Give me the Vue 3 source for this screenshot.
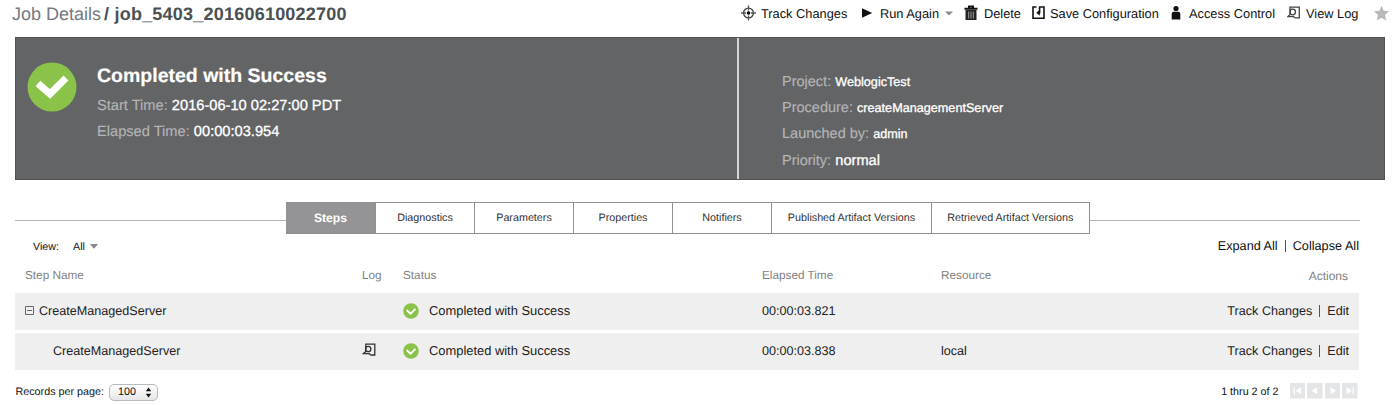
<script setup>
const info = [
  { label: 'Project:', value: 'WeblogicTest' },
  { label: 'Procedure:', value: 'createManagementServer' },
  { label: 'Launched by:', value: 'admin' },
  { label: 'Priority:', value: 'normal', large: true },
]
const tabs = ['Steps', 'Diagnostics', 'Parameters', 'Properties', 'Notifiers', 'Published Artifact Versions', 'Retrieved Artifact Versions']
const steps = [
  { name: 'CreateManagedServer', time: '00:00:03.821', resource: '', parent: true },
  { name: 'CreateManagedServer', time: '00:00:03.838', resource: 'local', parent: false },
]
const pager = ['M3.500 4h1.200v7H3.500zM10.500 4.200v6.600L5.500 7.500z', 'M9.800 4.200v6.600L4.500 7.500z', 'M5.500 4.200v6.600L10.800 7.500z', 'M4.500 4.200v6.600L9.500 7.500zM10.300 4h1.200v7h-1.200z']
</script>

<template>
  <div class="page">
    <header class="top">
      <h1><span class="crumb">Job Details</span><b>/ job_5403_20160610022700</b></h1>
      <nav class="tools">
        <svg width="16" height="16" viewBox="0 0 16 16"><circle cx="7.500" cy="8" r="4.900" fill="none" stroke="#444" stroke-width="1.4" /><path d="M7.500 .5v5M7.500 10.500v5M0 8h5M10 8h5" stroke="#555" stroke-width="1.3" /><circle cx="7.500" cy="8" r="1.800" fill="#000" /></svg>
        <span>Track Changes</span>
        <svg width="16" height="16" viewBox="0 0 16 16"><path d="M1 3.300v9.400L11.200 8z" fill="#111" /></svg>
        <span>Run Again</span>
        <svg width="16" height="16" viewBox="0 0 16 16"><path d="M0 6.500h8L4 10.600z" fill="#888" /></svg>
        <svg width="16" height="16" viewBox="0 0 16 16"><path d="M5 3V1.600h4V3M.5 3.800h13" fill="none" stroke="#111" stroke-width="2" /><path d="M1.500 5h11v10h-11z" fill="#222" /><path d="M4.700 6.500v7M7 6.500v7M9.300 6.500v7" stroke="#aaa" stroke-width=".9" /></svg>
        <span>Delete</span>
        <svg width="16" height="16" viewBox="0 0 16 16"><path d="M4.500 2H1v11.300h11V2H7.600v6.500" fill="none" stroke="#111" stroke-width="1.600" /><path d="M4.300 7.800l3.500-3v6z" fill="#111" /></svg>
        <span>Save Configuration</span>
        <svg width="16" height="16" viewBox="0 0 16 16"><circle cx="5" cy="3.500" r="2.600" fill="#111" /><path d="M.7 14.500V9q0-2.200 2-2.200h4.600q2 0 2 2.200v5.500z" fill="#111" /></svg>
        <span>Access Control</span>
        <svg width="16" height="16" viewBox="0 0 16 16"><path d="M3 5V2.200h9.300v10.600H8" fill="none" stroke="#444" stroke-width="1.3" /><circle cx="5.700" cy="7" r="2.800" fill="none" stroke="#444" stroke-width="1.3" /><path d="M3.600 9L.7 11.700h6l1.200 1.200M3.200 4.500v5" stroke="#444" stroke-width="1.3" fill="none" /></svg>
        <span>View Log</span>
        <svg width="16" height="16" viewBox="0 0 16 16"><path d="M7.500 .8l2.200 5 5.300.5-4 3.700 1.200 5.500-4.700-2.800-4.700 2.800L4 10 0 6.300l5.300-.5z" fill="#b9b9bb" /></svg>
      </nav>
    </header>

    <section class="banner">
      <div class="state">
        <svg class="ok" width="50" height="50" viewBox="0 0 50 50"><circle cx="25" cy="25" r="24.500" fill="#8bc34a" /><path d="M11 21.500l12 10.500L39 16" fill="none" stroke="#fff" stroke-width="7" /></svg>
        <div>
          <h2>Completed with Success</h2>
          <p><i>Start Time:</i> <span>2016-06-10 02:27:00 PDT</span></p>
          <p><i>Elapsed Time:</i> <span>00:00:03.954</span></p>
        </div>
      </div>
      <div class="info">
        <p v-for="r in info" :key="r.label"><i>{{ r.label }}</i> <span :class="{ small: !r.large }">{{ r.value }}</span></p>
      </div>
    </section>

    <nav class="tabs">
      <span class="rule"></span>
      <span v-for="(t, k) in tabs" :key="t" class="tab" :class="{ active: k === 0 }">{{ t }}</span>
      <span class="rule"></span>
    </nav>

    <div class="filter">
      <span class="view">View:</span><span class="all">All</span>
      <svg width="8" height="5" viewBox="0 0 8 5"><path d="M0 0h8L4 4.800z" fill="#888" /></svg>
      <span class="links">Expand All<em></em>Collapse All</span>
    </div>

    <div class="row head">
      <span class="name">Step Name</span><span>Log</span><span>Status</span><span>Elapsed Time</span><span>Resource</span><span class="act">Actions</span>
    </div>
    <div v-for="s in steps" :key="s.time" class="row body">
      <span class="name" :class="{ child: !s.parent }"><svg v-if="s.parent" width="9" height="9" viewBox="0 0 9 9"><path d="M.5.5h8v8h-8zM2 4.500h5" fill="none" stroke="#666" /></svg>{{ s.name }}</span>
      <span class="log"><svg v-if="!s.parent" width="14" height="14" viewBox="0 0 14 14"><path d="M3.800 4V1.200h9V12H8.500" fill="none" stroke="#333" stroke-width="1.3" /><circle cx="6.200" cy="6" r="2.700" fill="none" stroke="#333" stroke-width="1.300" /><path d="M4.200 8l-2.900 2.700h6l1.200 1.300M3.800 3.500v5" stroke="#333" stroke-width="1.300" fill="none" /></svg></span>
      <span class="status"><svg width="16" height="16" viewBox="0 0 16 16"><circle cx="8" cy="8" r="7.800" fill="#8bc34a" /><path d="M3.700 7l3.800 3.700L12.500 5.800" fill="none" stroke="#fff" stroke-width="1.800" /></svg>Completed with Success</span>
      <span class="time">{{ s.time }}</span><span>{{ s.resource }}</span>
      <span class="act">Track Changes<em></em>Edit</span>
    </div>

    <footer>
      <span>Records per page:</span>
      <span class="select">100<svg width="7" height="11" viewBox="0 0 7 11"><path d="M.8 4.300h5.400L3.500.5zM.8 6.700h5.400L3.500 10.500z" fill="#111" /></svg></span>
      <span class="count">1 thru 2 of 2</span>
      <span class="pager"><svg v-for="p in pager" :key="p" width="15.500" height="15.500" viewBox="0 0 15 15"><path d="M0 0h15v15H0z" fill="#e4e5e6" /><path :d="p" fill="#fff" /></svg></span>
    </footer>
  </div>
</template>

<style>
body { margin: 0; background: #fff; overflow: hidden; }
</style>
<style scoped>
.page { width: 1400px; height: 405px; box-sizing: border-box; overflow: hidden; font-family: "Liberation Sans", Arial, sans-serif; font-size: 12.6px; color: #222; text-rendering: geometricPrecision; }
.page * { box-sizing: border-box; }
h1, h2, p { margin: 0; font-weight: 400; white-space: nowrap; }
i, em { font-style: normal; }
svg { display: block; flex: none; }
span { white-space: nowrap; }
.top { height: 37px; display: flex; padding-left: 12px; }
h1 { width: 729px; font-size: 18px; line-height: 28px; color: #747a7d; }
h1 b { margin-left: 3px; color: #4a5054; letter-spacing: .22px; }
.tools { display: grid; grid-template-columns: 20px 100px 19px 65px 19px 20px 48px 18px 121px 18px 98px 19px 68px 16px; height: 26px; align-items: center; font-size: 12.8px; color: #111; }
.banner { margin-left: 15px; width: 1370px; height: 143px; background: #636466; border: 1px solid #505153; display: flex; color: #fff; font-size: 14.65px; }
.state { width: 723px; border-right: 2px solid #d5d5d5; display: flex; }
.ok { margin: 24px 20px 0 11px; }
h2 { font-size: 19.5px; font-weight: 700; line-height: 24px; margin-top: 26px; margin-bottom: 5px; -webkit-text-stroke: .2px #fff; }
p { line-height: 26.200px; }
p i { color: #b4b5b6; -webkit-text-stroke: .15px #b4b5b6; }
p span { -webkit-text-stroke: .3px #fff; }
p .small { font-size: 12.65px; }
.info { padding: 31px 0 0 43px; }
.info i { font-size: 14.5px; }
.tabs { display: grid; grid-template-columns: 271px 90px 99px 99px 99px 99px 160px 157.500px 270px; margin: 22px 0 0 15px; height: 32px; font-size: 10.75px; color: #333; }
.tab { border: 1px solid #8f9092; border-left-width: 0; border-right-width: 1.600px; display: flex; align-items: center; justify-content: center; padding-bottom: 1px; }
.active { background: #949496; color: #fff; font-weight: 700; font-size: 12.2px; }
.rule { height: 1px; background: #b5b5b5; margin-top: 18px; }
.filter { display: flex; height: 24px; align-items: center; padding-left: 33px; width: 1359px; font-size: 10.7px; color: #111; }
.view { width: 40px; padding-top: 2px; }
.all { width: 17px; padding-top: 2px; }
.links { margin-left: auto; font-size: 12.7px; display: flex; align-items: center; }
em { width: 1px; height: 12px; background: #555; margin: 0 7px; }
.row { display: grid; grid-template-columns: 347px 41px 359px 179px 200px 1fr; width: 1344px; margin-left: 15px; align-items: center; }
.head { height: 35px; font-size: 11.75px; color: #818181; }
.head .name { padding-left: 10px; }
.head .act { padding-right: 11px; font-size: 12px; }
.body { height: 37px; background: #efefef; margin-bottom: 3px; padding-bottom: 2px; }
.name { padding-left: 10px; display: flex; align-items: center; gap: 5px; }
.child { padding-left: 38px; }
.log svg { margin-top: -2px; }
.status { display: flex; align-items: center; gap: 10px; font-size: 12.9px; }
.status svg { margin-top: 1px; }
.act { display: flex; align-items: center; justify-content: flex-end; padding-right: 10px; }
footer { display: flex; align-items: center; height: 38px; margin-left: 15.500px; width: 1344px; font-size: 10.75px; color: #111; }
.select { margin-left: 5px; width: 49px; height: 17px; border: 1px solid #b7b8c2; border-radius: 5px; background: linear-gradient(#fff, #e6e6e8); display: flex; align-items: center; justify-content: space-between; padding: 0 5px 0 8px; }
.count { margin-left: auto; margin-right: 11px; }
.pager { display: flex; gap: 2px; margin: -2px 2px 0 0; }
</style>
